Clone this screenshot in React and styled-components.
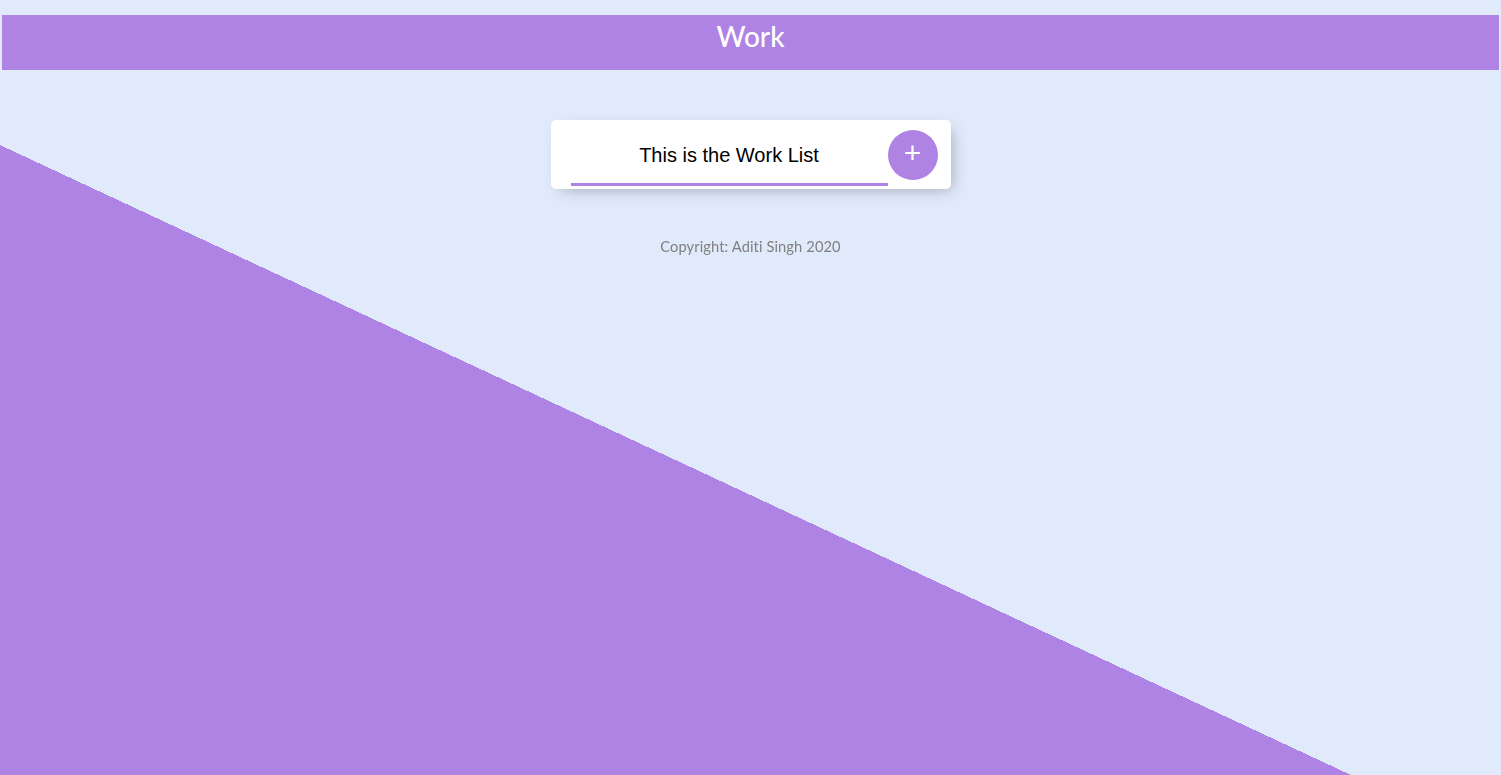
import React, { useEffect, useRef, useState } from 'react'
import styled, { createGlobalStyle } from "styled-components";

const GlobalStyle = createGlobalStyle`
  html, body {
    margin: 0;
    padding: 0;
    background: #E1EAFB;
  }
`

function App() {
    const inputRef = useRef(null);
    const [item, setItem] = useState("This is the Work List");

    useEffect(() => {
        const el = inputRef.current;
        if (el) {
            el.focus();
            el.setSelectionRange(el.value.length, el.value.length);
        }
    }, [])

    return (
        <Page>
            <GlobalStyle />
            <Heading>
                <h1>Work</h1>
            </Heading>

            <Box>
                <ItemForm onSubmit={e => e.preventDefault()}>
                    <TextInput
                        ref={inputRef}
                        type="text"
                        value={item}
                        onChange={e => setItem(e.target.value)}
                    />
                    <AddButton type="submit">+</AddButton>
                </ItemForm>
            </Box>

            <Footer>Copyright: Aditi Singh 2020</Footer>
        </Page>
    )
}

export default App;

const Page = styled.div`
  min-height: 990px;
  padding-top: 15px;
  box-sizing: border-box;
  background: linear-gradient(25deg, #AE83E3 50%, #E1EAFB 50%);
  font-family: "Lato", "Noto Sans", sans-serif;
`

const Heading = styled.div`
  margin: 0 2px;
  height: 55px;
  background-color: #AE83E3;
  text-align: center;

  > h1 {
    margin: 0;
    padding-top: 4px;
    color: #fff;
    font-family: "Lato", "Noto Sans", sans-serif;
    font-weight: 500;
    font-size: 28px;
    line-height: 34px;
  }
`

const Box = styled.div`
  width: 400px;
  height: 69px;
  margin: 50px auto 0;
  background: #fff;
  border-radius: 5px;
  box-shadow: 5px 5px 15px -5px rgba(0, 0, 0, 0.3);
  box-sizing: border-box;
  padding: 10px 12px 0 20px;
`

const ItemForm = styled.form`
  display: flex;
  align-items: flex-start;
  margin: 0;
`

const TextInput = styled.input`
  width: 317px;
  height: 56px;
  box-sizing: border-box;
  padding: 0 0 2px;
  border: none;
  border-bottom: 3px solid #AE83E3;
  background: transparent;
  outline: none;
  text-align: center;
  font-family: "Liberation Sans", Arial, sans-serif;
  font-size: 20px;
  color: #000;
  caret-color: #000;
`

const AddButton = styled.button`
  width: 50px;
  height: 50px;
  padding: 0 0 5px;
  border: none;
  border-radius: 50%;
  background-color: #AE83E3;
  color: #fff;
  font-family: "Liberation Sans", Arial, sans-serif;
  font-size: 30px;
  line-height: 1;
  cursor: pointer;
`

const Footer = styled.footer`
  margin-top: 48px;
  text-align: center;
  color: gray;
  font-size: 14.7px;
  letter-spacing: 0.1px;
`
